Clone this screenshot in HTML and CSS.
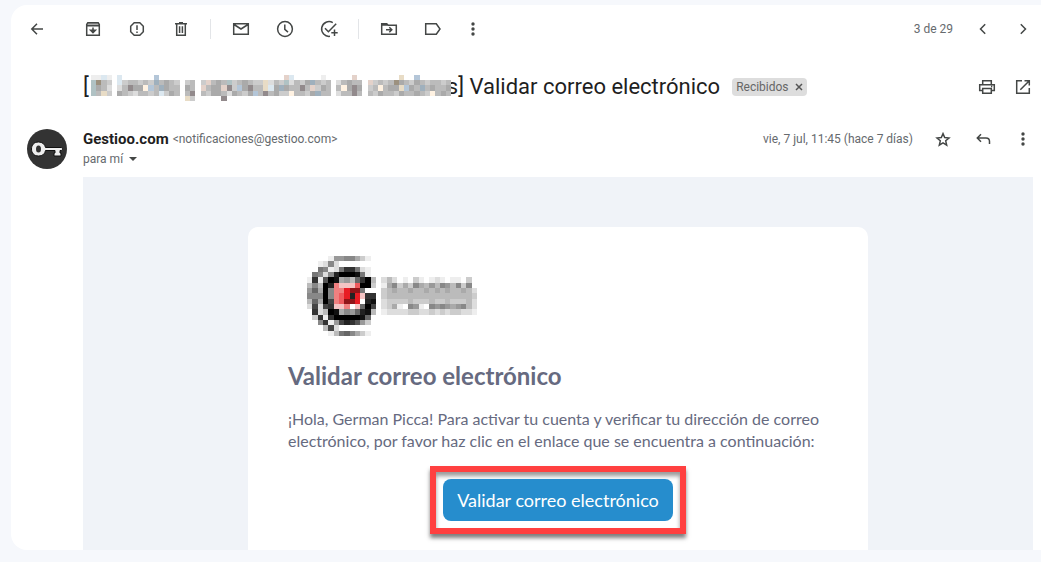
FILE: index.html
```html
<!DOCTYPE html>
<html lang="es">
<head>
  <meta charset="UTF-8" />
  <title>Validar correo electrónico</title>
  <meta name="viewport" content="width=device-width, initial-scale=1.0" />
  <link rel="stylesheet" href="styles.css">
</head>
<body>
  <main class="mail">
    <div class="toolbar" role="toolbar" aria-label="Acciones">
      <button class="tool back" aria-label="Volver">
        <svg class="icon" viewBox="0 0 20 20"><path d="M16 10H5M10 4.800L4.800 10l5.200 5.200"/></svg>
      </button>
      <button class="tool" aria-label="Archivar">
        <svg class="icon" viewBox="0 0 20 20"><path class="tint" d="M4 4h12v2.500H4z"/><path d="M4.800 3.700h10.400l1.100 1.800v10.800H3.700V5.500zM3.700 6.800h12.600"/><path d="M10 8.500v5M7.600 11.200L10 13.600l2.400-2.400z"/></svg>
      </button>
      <button class="tool" aria-label="Marcar como spam">
        <svg class="icon" viewBox="0 0 20 20"><path d="M7.200 3.700h5.600l3.500 3.500v5.600l-3.500 3.500H7.200l-3.500-3.500V7.200zM10 6.300v4.700M10 12.400v1.600"/></svg>
      </button>
      <button class="tool" aria-label="Eliminar">
        <svg class="icon" viewBox="0 0 20 20"><path d="M4 4.700h12M8 3.700h4M5.700 5v11.300h8.600V5M8.600 7.200v6.800M11.400 7.200v6.800"/></svg>
      </button>
      <span class="divider"></span>
      <button class="tool" aria-label="Marcar como no leído">
        <svg class="icon" viewBox="0 0 20 20"><path d="M2.700 4.700h14.600v10.600H2.700zM3 5.500l7 4.500 7-4.500"/></svg>
      </button>
      <button class="tool" aria-label="Posponer">
        <svg class="icon" viewBox="0 0 20 20"><circle cx="10" cy="10" r="7.400"/><path d="M9.800 5.500v4.800l3.200 2.800"/></svg>
      </button>
      <button class="tool" aria-label="Agregar a Tareas">
        <svg class="icon" viewBox="0 0 20 20"><path d="M13.800 3.600A7.400 7.400 0 1 0 11 17.300M6 9.300l3.400 3.400 7.800-8M15.500 10.500v6.400M12.300 13.700h6.400"/></svg>
      </button>
      <span class="divider"></span>
      <button class="tool" aria-label="Mover a">
        <svg class="icon" viewBox="0 0 20 20"><path d="M2.700 4.700h5l1.500 1.600h8.100v9H2.700zM2.700 6h6M7 10.800h5.500M10.300 8.300l2.500 2.500-2.500 2.500"/></svg>
      </button>
      <button class="tool" aria-label="Etiquetas">
        <svg class="icon" viewBox="0 0 20 20"><path d="M2.700 4.700h10.600L17 10l-3.700 5.300H2.700z"/></svg>
      </button>
      <button class="tool small" aria-label="Más">
        <svg class="icon dots" viewBox="0 0 20 20"><circle cx="10" cy="5" r="1.700"/><circle cx="10" cy="10" r="1.700"/><circle cx="10" cy="15" r="1.700"/></svg>
      </button>
      <div class="pager">
        <span class="count">3 de 29</span>
        <button class="tool small" aria-label="Más reciente">
          <svg class="icon" viewBox="0 0 20 20"><path d="M12.200 5.200L7.500 10l4.700 4.800"/></svg>
        </button>
        <button class="tool small" aria-label="Anterior">
          <svg class="icon" viewBox="0 0 20 20"><path d="M7.800 5.200l4.700 4.800-4.700 4.800"/></svg>
        </button>
      </div>
    </div>

    <header class="subject">
      <h1>[<svg class="mosaic hidden-name" data-mosaic="name"></svg>s] Validar correo electrónico</h1>
      <span class="chip">Recibidos <button aria-label="Quitar etiqueta Recibidos"><svg viewBox="0 0 8 8"><path d="M1 1l6 6M7 1L1 7"/></svg></button></span>
      <div class="actions">
        <button class="tool small" aria-label="Imprimir">
          <svg class="icon" viewBox="0 0 20 20"><path d="M5.700 7V3.700h8.600V7M5.500 13.500H2.700V7.700h14.600v5.800h-2.800M5.700 11.500h8.600v4.800H5.700zM14 9.500h1.300"/></svg>
        </button>
        <button class="tool small" aria-label="Abrir en ventana nueva">
          <svg class="icon" viewBox="0 0 20 20"><path d="M9 3.700H3.700v12.600h12.600V11M11.500 3.700h4.800v4.800M16.300 3.700l-9 9"/></svg>
        </button>
      </div>
    </header>

    <section class="sender">
      <svg class="avatar" viewBox="0 0 40 40">
        <circle cx="20" cy="20" r="20" fill="#333"/>
        <path d="M11.500 13c4 0 6.500 2.500 7 5.500H34c1 0 1.500.5 1.500 1.500s-.5 1.500-1.500 1.500h-1V24h1v3h-7v-3h1v-2.500h-9.500c-.5 3.500-3 5.500-7 5.500-4.500 0-7-3-7-7s2.500-7 7-7z" fill="#eee" stroke="#111"/>
        <ellipse cx="11.500" cy="20" rx="2.500" ry="3.500" fill="#333"/>
      </svg>
      <div class="who">
        <div class="from"><strong>Gestioo.com</strong> <span>&lt;notificaciones@gestioo.com&gt;</span></div>
        <div class="to">para mí <button aria-label="Mostrar detalles"><svg viewBox="0 0 8 4"><path d="M0 0h8L4 4z"/></svg></button></div>
      </div>
      <div class="actions">
        <time>vie, 7 jul, 11:45 (hace 7 días)</time>
        <button class="tool small" aria-label="Destacar">
          <svg class="icon" viewBox="0 0 20 20"><path d="M10 4.600l1.700 4 4.300.4-3.300 2.800 1 4.300L10 13.900l-3.700 2.200 1-4.300L4 9l4.300-.4z"/></svg>
        </button>
        <button class="tool small" aria-label="Responder">
          <svg class="icon" viewBox="0 0 20 20"><path d="M8 5.300L4.300 9 8 12.700M4.500 9H13c2 0 3.500 1.500 3.500 3.500V15"/></svg>
        </button>
        <button class="tool small" aria-label="Más opciones">
          <svg class="icon dots" viewBox="0 0 20 20"><circle cx="10" cy="5" r="1.700"/><circle cx="10" cy="10" r="1.700"/><circle cx="10" cy="15" r="1.700"/></svg>
        </button>
      </div>
    </section>

    <article class="message">
      <div class="letter">
        <svg class="mosaic logo" data-mosaic="logo" role="img" aria-label="Logo"></svg>
        <h2>Validar correo electrónico</h2>
        <p>¡Hola, German Picca! Para activar tu cuenta y verificar tu dirección de correo electrónico, por favor haz clic en el enlace que se encuentra a continuación:</p>
        <div class="highlight">
          <a class="cta" href="#validar">Validar correo electrónico</a>
        </div>
      </div>
    </article>
  </main>

  <script src="mosaic.js"></script>
</body>
</html>
```
FILE: styles.css
```css
* {
  box-sizing: border-box;
}

body {
  margin: 0;
  min-height: 100vh;
  padding: 5px 0 12px 11px;
  display: flex;
  background: #f6f8fc;
  color: #666a6e;
  font-family: Roboto, Arial, sans-serif;
  font-size: 12px;
  line-height: 20px;
}

button {
  padding: 0;
  border: none;
  background: none;
  color: inherit;
  font: inherit;
  cursor: pointer;
}

.mail {
  flex: 1;
  display: flex;
  flex-direction: column;
  background: #fff;
  border-radius: 16px 0 0 16px;
  overflow: hidden;
}

/* Icons */
.tool {
  width: 44px;
  height: 36px;
  flex-shrink: 0;
  display: flex;
  align-items: center;
  justify-content: center;
}

.tool.small {
  width: 36px;
}

.icon {
  width: 20px;
  height: 20px;
  fill: none;
  stroke: #444746;
  stroke-width: 1.5;
}

.icon .tint {
  fill: #aaa;
  stroke: none;
}

.icon.dots {
  fill: #444746;
  stroke: none;
}

/* Toolbar */
.toolbar {
  height: 48px;
  padding-left: 4px;
  display: flex;
  align-items: center;
}

.back {
  margin-right: 12px;
}

.divider {
  width: 1px;
  height: 20px;
  margin: 0 8px 0 7px;
  background: #e3e5e8;
}

.pager,
.actions {
  margin-left: auto;
  display: flex;
  align-items: center;
  gap: 4px;
}

.count {
  margin-right: 8px;
}

/* Subject */
.subject {
  height: 68px;
  padding-left: 72px;
  display: flex;
  align-items: center;
}

.subject .actions {
  gap: 0;
}

h1 {
  margin: 0;
  color: #1f1f1f;
  font-size: 22px;
  font-weight: 400;
  line-height: 28px;
  white-space: nowrap;
}

.mosaic {
  shape-rendering: crispEdges;
}

/* covers part of the letter that follows */
.hidden-name {
  position: relative;
  width: 360px;
  height: 26px;
  margin: 0 -4px 0 2px;
  vertical-align: middle;
}

.chip {
  height: 18px;
  margin-left: 12px;
  padding: 0 4px;
  display: flex;
  align-items: center;
  gap: 6px;
  border-radius: 4px;
  background: #ddd;
  color: #666;
}

.chip button {
  display: flex;
}

.chip svg {
  width: 8px;
  height: 8px;
  fill: none;
  stroke: #555;
  stroke-width: 1.5;
}

/* Sender */
.sender {
  padding: 8px 0 8px 16px;
  display: flex;
  align-items: flex-start;
}

.avatar {
  width: 40px;
  height: 40px;
  margin-right: 16px;
}

.from,
.to {
  height: 20px;
  display: flex;
  align-items: center;
  gap: 4px;
}

.from strong {
  color: #1f1f1f;
  font-size: 15px;
}

.to button {
  padding: 0 2px;
}

.to svg {
  display: block;
  width: 8px;
  height: 4px;
  fill: #444746;
}

.sender .actions {
  height: 20px;
}

.sender time {
  margin-right: 8px;
}

/* Message body */
.message {
  flex: 1;
  margin: 0 8px 0 72px;
  padding-top: 50px;
  display: flex;
  justify-content: center;
  background: #f0f3f8;
}

.letter {
  width: 100%;
  max-width: 620px;
  padding: 29px 40px 0;
  background: #fff;
  border-radius: 10px 10px 0 0;
  color: #666a80;
  font-family: Lato, sans-serif;
}

.logo {
  display: block;
  width: 170px;
  height: 80px;
  margin: 0 0 24px 19px;
}

h2 {
  margin: 0 0 16px;
  font-size: 24px;
  line-height: 32px;
}

.letter p {
  margin: 0 0 14px;
  font-size: 16px;
  line-height: 22px;
}

.highlight {
  width: fit-content;
  margin: 0 auto;
  padding: 7px;
  border: 6px solid #ff4040;
  box-shadow: 0 4px 4px rgba(0, 0, 0, 0.5), inset 0 4px 4px rgba(0, 0, 0, 0.4);
}

.cta {
  display: block;
  padding: 10px 14px;
  border-radius: 8px;
  background: #268dcd;
  color: #fff;
  font-size: 18px;
  line-height: 22px;
  text-decoration: none;
}
```
FILE: mosaic.js
```javascript
// 0-f are grey levels, capitals are tints, a dot is empty
const tints = {
  T: "#b0c2c4", O: "#9c917f", Y: "#e8dcc6", B: "#dce8f0", C: "#b4c6d8",
  P: "#e4d2ca", M: "#928a8c", S: "#9fb0bd", W: "#fff2e2",
  R: "#e81c24", D: "#901418", K: "#f5c4c4", L: "#f08080", N: "#ee5a5e"
};

const mosaics = {
  logo: [
    "....e9988ace....................",
    "..ed8d..........................",
    "..78ed7337de....................",
    ".78d8200017e....................",
    "e3e501a9b630b.dbd.e.ce.ede.ee.c.",
    "b8b02LKKKN00c.ea8cac8ab9b89b8c8.",
    "96a08LLRDD7...cbabbabbabababbabd",
    "88808LNR2RK33.cbbbbbbbbbbbbbbbbc",
    "b6a04LNDDR.21.dccccbcccbccbcccbd",
    "d4d43KKL.K604.dcae.89e.8989a98bd",
    ".3db01a89621b.eddddccddcdcdccdde",
    ".c3e30000016....................",
    "..83e942359c....................",
    "...b4d..........................",
    "....eb768ace...................."
  ],
  name: [
    "eeBe.B......C........................PB.....e.....P........Y..C.......",
    "TObc.BcbbcbcSbabc.cb.cPbabTcbabccYdbcTdbcaSbcb.dbabb.PcbcbOabcabcbbcb",
    "Tabd.dbMaaWCbSabb.ab.PbaaPMcCaMbbYBaSabbMbPcab.bWaMa.cbWbaaYCabSbabba",
    "TbYc.abcdbbcbBcab.bM.bcaabdabcaCbMbaccWbbcaSbb.dbbMb.bcabbcabbabcWbab",
    "..................Yc.....M..........................................."
  ]
};

document.querySelectorAll("[data-mosaic]").forEach(svg => {
  const rows = mosaics[svg.dataset.mosaic];
  const columns = rows[1].length;
  svg.setAttribute("viewBox", `0 0 ${columns} ${rows.length}`);
  svg.setAttribute("preserveAspectRatio", "none");
  rows.forEach((row, y) => {
    [...row].forEach((c, x) => {
      if (c === ".") return;
      const cell = document.createElementNS("http://www.w3.org/2000/svg", "rect");
      cell.setAttribute("x", x);
      cell.setAttribute("y", y);
      cell.setAttribute("width", 1);
      cell.setAttribute("height", 1);
      cell.setAttribute("fill", tints[c] || `#${c}${c}${c}`);
      svg.appendChild(cell);
    });
  });
});
```
